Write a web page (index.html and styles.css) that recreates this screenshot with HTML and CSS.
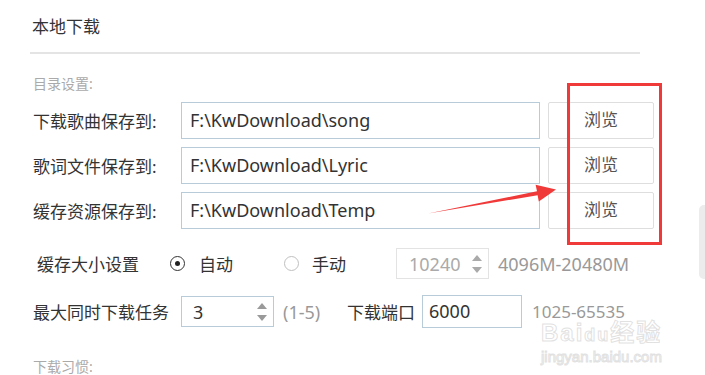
FILE: index.html
```html
<!DOCTYPE html>
<html lang="zh">
<head>
<meta charset="utf-8">
<link rel="stylesheet" href="styles.css">
</head>
<body>
<div class="page">
  <div class="title">本地下载</div>
  <div class="rule"></div>
  <div class="section">目录设置:</div>

  <div class="dir-row">
    <div class="label">下载歌曲保存到:</div>
    <div class="path">F:\KwDownload\song</div>
    <div class="btn">浏览</div>
  </div>
  <div class="dir-row">
    <div class="label">歌词文件保存到:</div>
    <div class="path">F:\KwDownload\Lyric</div>
    <div class="btn">浏览</div>
  </div>
  <div class="dir-row">
    <div class="label">缓存资源保存到:</div>
    <div class="path">F:\KwDownload\Temp</div>
    <div class="btn">浏览</div>
  </div>

  <div class="size-row">
    <div class="size-label">缓存大小设置</div>
    <span class="radio checked"></span>
    <span class="radio-text">自动</span>
    <span class="radio second"></span>
    <span class="radio-text">手动</span>
    <div class="spin disabled">
      <span class="spin-val">10240</span>
      <span class="arrows"><i class="up"></i><i class="down"></i></span>
    </div>
    <span class="hint">4096M-20480M</span>
  </div>

  <div class="task-row">
    <div class="label">最大同时下载任务</div>
    <div class="spin">
      <span class="spin-val">3</span>
      <span class="arrows"><i class="up"></i><i class="down"></i></span>
    </div>
    <span class="range">(1-5)</span>
    <span class="port-label">下载端口</span>
    <div class="port">6000</div>
    <span class="hint port-hint">1025-65535</span>
  </div>

  <div class="section habit">下载习惯:</div>

  <div class="highlight"></div>
  <svg class="arrow" width="705" height="375" viewBox="0 0 705 375">
    <polygon points="428,213.5 537,191.3 535.6,184.8 556,189.6 538.8,201.6 537.6,195.2" fill="#f03a3a"/>
  </svg>
  <div class="scroll-thumb"></div>
  <div class="watermark">
    <div class="wm-main">Bai<span class="wm-du">du</span>经验</div>
    <div class="wm-url">jingyan.baidu.com</div>
  </div>
</div>
</body>
</html>
```

FILE: styles.css
```css
html, body {
  margin: 0;
  padding: 0;
  background: #ffffff;
}
.page {
  position: relative;
  width: 705px;
  height: 375px;
  overflow: hidden;
  font-family: "Noto Sans", "Noto Sans CJK SC", sans-serif;
  color: #333333;
  font-size: 17px;
  padding-left: 33px;
  box-sizing: border-box;
}
.title {
  padding-top: 15px;
  line-height: 24px;
  height: 24px;
  margin-left: -1px;
}
.rule {
  margin-top: 13px;
  margin-left: -3px;
  width: 610px;
  height: 2px;
  background: #e4e4e4;
}
.section {
  margin-top: 20px;
  font-size: 14px;
  line-height: 20px;
  color: #aaaaaa;
}
.dir-row {
  display: flex;
  align-items: center;
  height: 37px;
  margin-top: 8px;
}
.label {
  width: 148px;
  flex: none;
  white-space: nowrap;
}
.path {
  width: 359px;
  height: 37px;
  box-sizing: border-box;
  border: 1.5px solid #b8cbd9;
  padding-left: 8px;
  line-height: 34px;
  font-size: 18px;
  flex: none;
}
.btn {
  margin-left: 8px;
  width: 106px;
  height: 37px;
  box-sizing: border-box;
  border: 1.5px solid #dedede;
  border-radius: 2px;
  text-align: center;
  line-height: 34px;
  color: #555555;
  flex: none;
}
.size-row {
  display: flex;
  align-items: center;
  height: 31px;
  margin-top: 19px;
}
.size-label {
  width: 133px;
  padding-left: 4px;
  flex: none;
}
.radio {
  width: 15px;
  height: 15px;
  box-sizing: border-box;
  border-radius: 50%;
  border: 1.5px solid #c0c0c0;
  flex: none;
  position: relative;
}
.radio.checked {
  border-color: #333333;
}
.radio.checked::after {
  content: "";
  position: absolute;
  left: 3.5px;
  top: 3.5px;
  width: 5px;
  height: 5px;
  border-radius: 50%;
  background: #222222;
}
.radio-text {
  margin-left: 14px;
  width: 36px;
  flex: none;
}
.radio.second {
  margin-left: 49px;
}
.radio.second + .radio-text {
  margin-left: 13px;
}
.spin {
  width: 93px;
  height: 31px;
  box-sizing: border-box;
  border: 1.5px solid #b8cbd9;
  display: flex;
  align-items: center;
  justify-content: space-between;
  padding: 0 6px 0 11px;
  font-size: 18px;
  flex: none;
}
.size-row .spin {
  margin-left: 48px;
}
.spin.disabled {
  border-color: #e3e3e3;
  color: #aaaaaa;
  padding-left: 12px;
}
.arrows {
  display: flex;
  flex-direction: column;
  gap: 6px;
}
.arrows i {
  display: block;
  width: 0;
  height: 0;
  border-left: 5px solid transparent;
  border-right: 5px solid transparent;
}
.arrows .up {
  border-bottom: 6px solid #9a9a9a;
}
.arrows .down {
  border-top: 6px solid #9a9a9a;
}
.spin.disabled .arrows .up {
  border-bottom-color: #aaaaaa;
}
.spin.disabled .arrows .down {
  border-top-color: #aaaaaa;
}
.hint {
  margin-left: 9px;
  color: #999999;
  font-size: 18px;
  white-space: nowrap;
}
.task-row {
  display: flex;
  align-items: center;
  height: 33px;
  margin-top: 16px;
}
.task-row .spin {
  height: 31px;
}
.range {
  width: 64px;
  margin-left: 9px;
  color: #999999;
  font-size: 18px;
  flex: none;
}
.port-label {
  width: 75px;
  flex: none;
}
.port {
  width: 100px;
  height: 33px;
  box-sizing: border-box;
  border: 1.5px solid #b8cbd9;
  padding-left: 6px;
  line-height: 30px;
  font-size: 18px;
  flex: none;
}
.port-hint {
  margin-left: 10px;
  font-size: 17px;
}
.habit {
  margin-top: 29px;
}
.highlight {
  position: absolute;
  left: 567px;
  top: 83px;
  width: 95px;
  height: 162px;
  box-sizing: border-box;
  border: 3px solid #f03a3a;
}
.arrow {
  position: absolute;
  left: 0;
  top: 0;
}
.scroll-thumb {
  position: absolute;
  left: 699px;
  top: 205px;
  width: 10px;
  height: 74px;
  border-radius: 5px;
  background: #ececec;
}
.watermark {
  position: absolute;
  left: 541px;
  top: 322px;
  color: rgba(255, 255, 255, 0.2);
  -webkit-text-stroke: 1px rgba(195, 195, 195, 0.5);
  font-family: "Liberation Sans", "Noto Sans CJK SC", sans-serif;
}
.wm-main {
  font-size: 24px;
  font-weight: bold;
  line-height: 22px;
  letter-spacing: 2px;
}
.wm-du {
  font-size: 18px;
}
.wm-url {
  font-size: 15px;
  line-height: 16px;
  margin-top: 3px;
}
```
